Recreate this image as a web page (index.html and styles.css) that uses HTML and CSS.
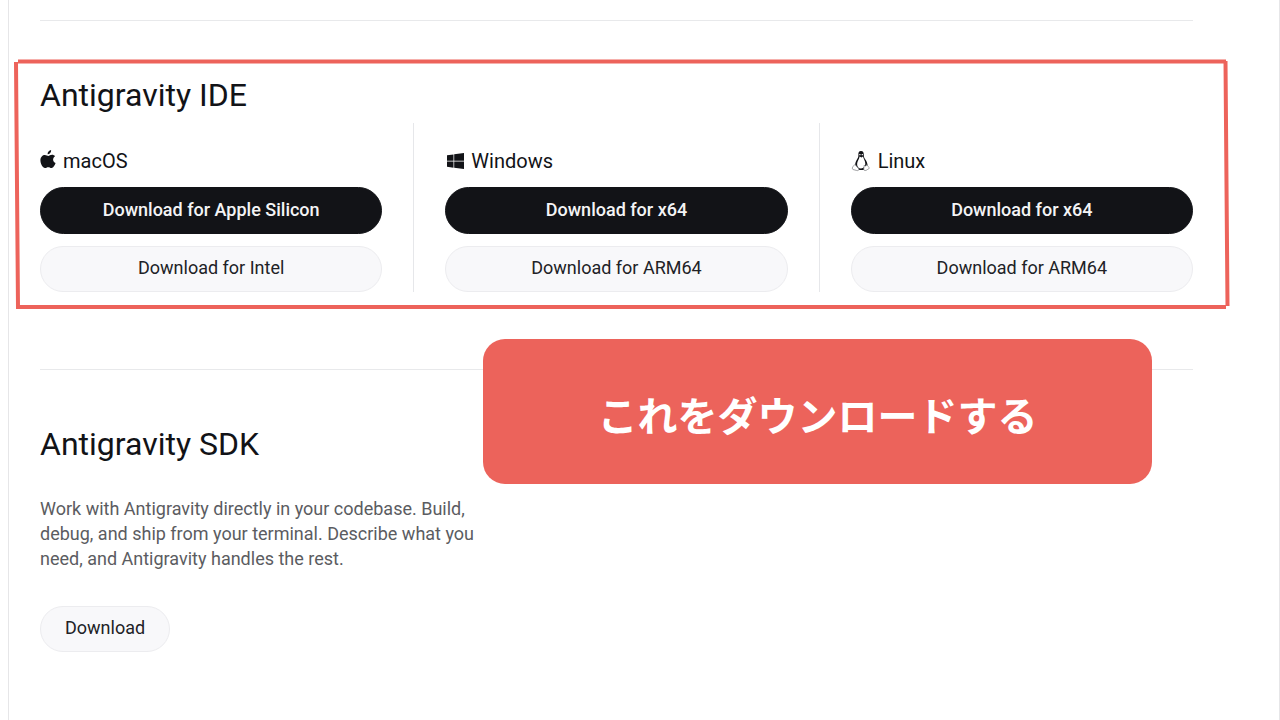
FILE: index.html
```html
<!DOCTYPE html>
<html lang="en">
<head>
<meta charset="utf-8">
<meta name="viewport" content="width=device-width, initial-scale=1">
<title>Antigravity downloads</title>
<link rel="stylesheet" href="styles.css">
</head>
<body>
<main class="page">
  <section class="product">
    <h2 class="product-title">Antigravity IDE</h2>
    <div class="platforms">
      <div class="platform">
        <h3 class="platform-name">
          <svg class="icon icon-apple" viewBox="0 0 16 20" aria-hidden="true"><path d="M11.300 0c.2 2.400-1.600 4.500-3.700 4.500C7.300 2.400 9.200.3 11.300 0zM15.400 6.600c-3 1.900-2.500 5.900.6 7.200-.8 2.200-2.500 5.200-4.200 5.200-1.400 0-1.900-.8-3.500-.8s-2.200.8-3.500.8C2.500 19 0 14.600 0 10.900c0-3.700 2.400-5.700 4.700-5.700 1.500 0 2.700 1 3.600 1 .9 0 2.300-1.100 4-1.100 1.200 0 2.400.6 3.100 1.500z"/></svg>
          macOS
        </h3>
        <div class="actions">
          <button class="button button-primary" type="button">Download for Apple Silicon</button>
          <button class="button" type="button">Download for Intel</button>
        </div>
      </div>
      <div class="separator"></div>
      <div class="platform">
        <h3 class="platform-name">
          <svg class="icon icon-windows" viewBox="0 0 19 16" aria-hidden="true"><path d="M2 2.200 8.500 1.400V7.700H2zM9.200 1.300 19 0V7.700H9.200zM2 8.400H8.500V14.700L2 13.800zM9.200 8.400H19V16L9.200 14.800z"/></svg>
          Windows
        </h3>
        <div class="actions">
          <button class="button button-primary" type="button">Download for x64</button>
          <button class="button" type="button">Download for ARM64</button>
        </div>
      </div>
      <div class="separator"></div>
      <div class="platform">
        <h3 class="platform-name">
          <svg class="icon icon-linux" viewBox="0 0 20 22" aria-hidden="true">
            <path class="tux-body" d="M10 1C7.700 1 7.200 2.900 7.400 5c.1 2-.5 3-1.600 4.700C4.700 11.600 3.700 14.500 4.200 16.500L8 20h5l3.500-3.500c.2-3-.8-5.200-2.300-7.200-1-1.400-1.400-2.400-1.400-4.600C12.800 2.400 12.200 1 10 1z"/>
            <path class="tux-belly" d="M8.600 6.500 10.500 7.400 12 6.500c.4 2 2.200 4 2.300 7 0 2.500-1.600 4.900-4.300 4.900-2.500 0-4-2-3.900-4.500.1-2.800 2.100-4.500 2.500-7.400z"/>
            <path class="tux-face" d="M8.300 4h1.200v1.200H8.300zM10.700 4h1.200v1.200h-1.200z"/>
            <path class="tux-feet" d="M4 14.500 7.700 18.800c.6 1.500-.7 2.200-2.400 1.600L2 19.500c-1-.3-.5-1.600-.4-2.700.8-.9 1.500-1 2.400-2.300zM16 14.500c.4 1.700 1.200 2 2.200 3 .8.900-1 1.600-1.900 2.100-1.200 1.200-3.500 1.400-3.600-.3L13.300 15c.7 1.600 1.800 1.200 2.700-.5z"/>
          </svg>
          Linux
        </h3>
        <div class="actions">
          <button class="button button-primary" type="button">Download for x64</button>
          <button class="button" type="button">Download for ARM64</button>
        </div>
      </div>
    </div>
    <svg class="highlight" viewBox="0 0 1214 250" preserveAspectRatio="none" aria-hidden="true">
      <path d="M3 2.500H1211M1 3 3 249M1 248H1211M1210.500 2 1212.500 247"/>
    </svg>
    <p class="callout" lang="ja">これをダウンロードする</p>
  </section>
  <section class="product">
    <h2 class="product-title">Antigravity SDK</h2>
    <p class="description">Work with Antigravity directly in your codebase. Build, debug, and ship from your terminal. Describe what you need, and Antigravity handles the rest.</p>
    <button class="button" type="button">Download</button>
  </section>
</main>
</body>
</html>
```
FILE: styles.css
```css
* {
  box-sizing: border-box;
}

body {
  margin: 0;
  background: #fff;
  color: #121317;
  font-family: Roboto, "Noto Sans", "Noto Sans CJK JP", sans-serif;
}

.page {
  min-height: 100vh;
  margin-left: 8px;
  padding: 20px 86px 0 31px;
  border: solid #e6e6e8;
  border-width: 0 1px;
}

.product {
  position: relative;
  min-height: 349px;
  padding-top: 54px;
  border-top: 1px solid #e8e9eb;
}

.product-title {
  margin: 0;
  font-size: 32px;
  font-weight: 400;
  line-height: 40px;
}

.platforms {
  display: grid;
  grid-template-columns: 1fr 1px 1fr 1px 1fr;
  gap: 31px;
  margin-top: 8px;
}

.separator {
  background: #e6e7ea;
}

.platform {
  padding-top: 24px;
}

.platform-name {
  display: flex;
  align-items: center;
  gap: 7px;
  margin: 0 0 12px;
  font-size: 20px;
  font-weight: 400;
  line-height: 28px;
}

.icon {
  flex: none;
  fill: #121317;
}

.icon-apple {
  width: 16px;
  height: 22px;
  padding-bottom: 3px;
}

.icon-windows {
  width: 19px;
  height: 16px;
}

.icon-linux {
  width: 20px;
  height: 22px;
}

.tux-belly,
.tux-face {
  fill: #fff;
}

.tux-feet {
  fill: #fff;
  stroke: #77787b;
  stroke-width: 0.7;
}

.actions {
  display: grid;
  gap: 12px;
}

.button {
  min-height: 46px;
  padding: 0 24px 2px;
  border: 1px solid #ececef;
  border-radius: 24px;
  background: #f8f8fa;
  color: #212226;
  font: inherit;
  font-size: 18px;
  font-weight: 400;
  line-height: 24px;
  cursor: pointer;
}

.button-primary {
  min-height: 47px;
  border-color: #121317;
  background: #121317;
  color: #f4f4f5;
  font-weight: 500;
}

.description {
  max-width: 440px;
  margin: 32px 0 35px;
  color: #5b5c61;
  font-size: 18px;
  line-height: 25px;
}

.highlight {
  position: absolute;
  top: 38px;
  left: -25px;
  width: calc(100% + 61px);
  height: 250px;
  overflow: visible;
  fill: none;
  stroke: #ed635b;
  stroke-width: 4;
  pointer-events: none;
}

.callout {
  position: absolute;
  z-index: 1;
  top: 318px;
  right: 41px;
  display: grid;
  place-items: center;
  width: 58%;
  min-height: 145px;
  margin: 0;
  padding: 4px 24px 0;
  border-radius: 22px;
  background: #ec635b;
  color: #fff;
  font-family: "Noto Sans CJK JP", sans-serif;
  font-size: 40px;
  font-weight: 700;
}
```
